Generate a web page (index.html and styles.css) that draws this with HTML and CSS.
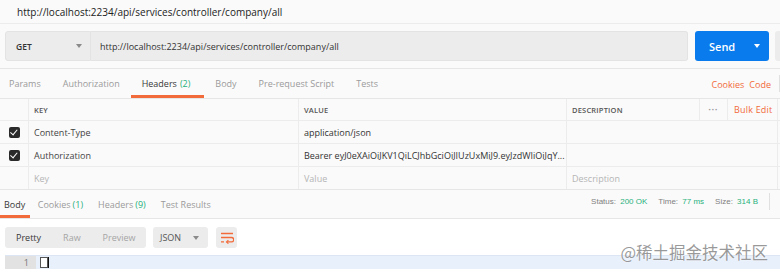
FILE: index.html
```html
<!DOCTYPE html>
<html>
<head>
  <meta charset="UTF-8">
  <link rel="stylesheet" href="styles.css">
</head>
<body>
  <div class="title-bar">http://localhost:2234/api/services/controller/company/all</div>

  <div class="request-bar">
    <div class="method">GET <span class="caret"></span></div>
    <div class="url">http://localhost:2234/api/services/controller/company/all</div>
    <div class="send">Send <span class="caret white"></span></div>
    <div class="save"></div>
  </div>

  <div class="req-tabs">
    <a class="tab">Params</a>
    <a class="tab">Authorization</a>
    <a class="tab active">Headers <span class="count">(2)</span></a>
    <a class="tab">Body</a>
    <a class="tab">Pre-request Script</a>
    <a class="tab">Tests</a>
    <div class="tab-links">
      <a class="orange-link">Cookies</a>
      <a class="orange-link">Code</a>
    </div>
  </div>

  <div class="headers-table">
    <div class="row head">
      <div class="cell check"></div>
      <div class="cell key">KEY</div>
      <div class="cell value">VALUE</div>
      <div class="cell desc">DESCRIPTION</div>
      <div class="cell dots">•••</div>
      <div class="cell bulk"><a class="orange-link">Bulk Edit</a></div>
    </div>
    <div class="row">
      <div class="cell check"><span class="checkbox"></span></div>
      <div class="cell key">Content-Type</div>
      <div class="cell value">application/json</div>
      <div class="cell desc wide"></div>
    </div>
    <div class="row">
      <div class="cell check"><span class="checkbox"></span></div>
      <div class="cell key">Authorization</div>
      <div class="cell value">Bearer eyJ0eXAiOiJKV1QiLCJhbGciOiJIUzUxMiJ9.eyJzdWIiOiJqY...</div>
      <div class="cell desc wide"></div>
    </div>
    <div class="row last">
      <div class="cell check"></div>
      <div class="cell key placeholder">Key</div>
      <div class="cell value placeholder">Value</div>
      <div class="cell desc wide placeholder">Description</div>
    </div>
  </div>

  <div class="res-tabs">
    <a class="tab active">Body</a>
    <a class="tab">Cookies <span class="count">(1)</span></a>
    <a class="tab">Headers <span class="count">(9)</span></a>
    <a class="tab">Test Results</a>
    <div class="meta">
      <span>Status: <b>200 OK</b></span>
      <span>Time: <b>77 ms</b></span>
      <span>Size: <b>314 B</b></span>
      <span class="meta-sep"></span>
    </div>
  </div>

  <div class="res-body">
    <div class="toolbar">
      <div class="mode-group">
        <span class="mode active">Pretty</span>
        <span class="mode">Raw</span>
        <span class="mode">Preview</span>
      </div>
      <div class="format">JSON <span class="caret"></span></div>
      <div class="wrap-btn">
        <svg width="14" height="12" viewBox="0 0 14 12">
          <path d="M1 1.5h12M1 5.5h10.5a2.2 2.2 0 0 1 0 4.4H7M1 9.9h3" fill="none" stroke="#f26b3a" stroke-width="1.3"/>
          <path d="M8.4 8.2 6.5 9.9l1.9 1.7" fill="none" stroke="#f26b3a" stroke-width="1.2"/>
        </svg>
      </div>
    </div>
    <div class="editor">
      <div class="gutter">1</div>
      <div class="line"><span class="bracket"></span><span class="cursor"></span></div>
    </div>
    <div class="watermark">@稀土掘金技术社区</div>
  </div>
</body>
</html>
```

FILE: styles.css
```css
body {
  margin: 0;
  background: #fafafa;
  font-family: "Open Sans", "Noto Sans", sans-serif;
  font-size: 9px;
  color: #505050;
  overflow: hidden;
}

a {
  text-decoration: none;
}

.title-bar {
  height: 23px;
  line-height: 25px;
  padding-left: 17px;
  font-size: 10px;
  color: #222;
  border-bottom: 1px solid #ececec;
}

/* request url bar */
.request-bar {
  display: flex;
  height: 30px;
  padding: 7px 0 7px 5px;
  border-bottom: 1px solid #e6e6e6;
}

.method {
  width: 86px;
  display: flex;
  align-items: center;
  justify-content: space-between;
  padding: 0 8px 0 10px;
  box-sizing: border-box;
  background: #ececec;
  border: 1px solid #e3e3e3;
  border-radius: 3px 0 0 3px;
  font-size: 8.5px;
  font-weight: 600;
  color: #333;
}

.url {
  flex: 1;
  display: flex;
  align-items: center;
  padding-left: 9px;
  background: #ececec;
  border: 1px solid #e3e3e3;
  border-left: none;
  border-radius: 0 3px 3px 0;
  font-size: 9px;
  color: #333;
}

.send {
  width: 74px;
  margin-left: 7px;
  display: flex;
  align-items: center;
  justify-content: space-between;
  padding: 0 9px 0 14px;
  box-sizing: border-box;
  background: #097bed;
  border-radius: 3px;
  color: #fff;
  font-size: 11px;
  font-weight: 600;
}

.save {
  width: 5px;
  margin-left: 6px;
  background: #ececec;
  border-radius: 3px 0 0 3px;
}

.caret {
  width: 0;
  height: 0;
  border-left: 3px solid transparent;
  border-right: 3px solid transparent;
  border-top: 4px solid #8a8a8a;
}

.caret.white {
  border-top-color: #fff;
}

/* tabs */
.req-tabs,
.res-tabs {
  display: flex;
  align-items: stretch;
}

.req-tabs {
  height: 29px;
  padding-left: 9px;
  border-bottom: 1px solid #e6e6e6;
}

.tab {
  display: flex;
  align-items: center;
  padding: 2px 11px 0;
  color: #9a9a9a;
  border-bottom: 3px solid transparent;
}

.req-tabs .tab:first-child {
  padding-left: 0;
}

.req-tabs .tab.active {
  padding-right: 14px;
}

.tab.active {
  color: #383838;
  border-bottom-color: #f26b3a;
}

.count {
  color: #27b17c;
  margin-left: 3px;
}

.tab-links {
  margin: 6px 0 6px auto;
  display: flex;
  align-items: center;
  gap: 5px;
  padding: 2px 8px 0 0;
  border-right: 1px solid #e0e0e0;
}

.orange-link {
  color: #f26b3a;
}

/* headers table */
.headers-table {
  border-bottom: 1px solid #e6e6e6;
}

.row {
  display: flex;
  height: 22px;
  border-bottom: 1px solid #ececec;
}

.row.last {
  border-bottom: none;
}

.row.head {
  height: 21px;
  font-size: 7.5px;
  font-weight: 600;
  letter-spacing: 0.2px;
}

.cell {
  display: flex;
  align-items: center;
  border-right: 1px solid #ececec;
  padding-left: 5px;
  box-sizing: border-box;
  overflow: hidden;
  white-space: nowrap;
}

.cell.check {
  width: 29px;
  justify-content: center;
  padding-left: 0;
}

.cell.key {
  width: 270px;
  color: #444;
}

.cell.value {
  width: 268px;
  color: #333;
}

.row.head .cell.value,
.row.head .cell.key {
  color: #555;
}

.cell.desc {
  width: 133px;
  color: #555;
}

.cell.desc.wide {
  width: 211px;
}

.cell.dots {
  width: 28px;
  justify-content: center;
  padding-left: 0;
  color: #999;
  font-size: 6px;
  letter-spacing: 1px;
}

.cell.bulk {
  width: 50px;
  padding-left: 6px;
  font-size: 9px;
  font-weight: 400;
}

.cell.placeholder {
  color: #b5b5b5;
}

.checkbox {
  position: relative;
  width: 11px;
  height: 11px;
  background: #2a2a2a;
  border-radius: 2px;
}

.checkbox::after {
  content: "";
  position: absolute;
  left: 3.5px;
  top: 1.5px;
  width: 3px;
  height: 5.5px;
  border-right: 1.6px solid #fff;
  border-bottom: 1.6px solid #fff;
  transform: rotate(40deg);
}

/* response */
.res-tabs {
  height: 28px;
  border-bottom: 1px solid #e6e6e6;
}

.res-tabs .tab {
  padding: 4px 7.5px 0;
}

.res-tabs .tab:first-child {
  padding: 4px 5px 0 4px;
}

.res-tabs .count {
  margin-left: 2px;
}

.meta {
  margin-left: auto;
  display: flex;
  align-items: center;
  gap: 11px;
  padding-bottom: 6px;
  font-family: "Liberation Sans", Arial, sans-serif;
  font-size: 8px;
  color: #808080;
}

.meta b {
  font-weight: 400;
  color: #27b17c;
  margin-left: 2px;
}

.meta-sep {
  width: 10px;
  height: 17px;
  border-left: 1px solid #e0e0e0;
}

.res-body {
  position: relative;
  background: #fff;
  height: 46px;
  padding: 8px 0 0 5px;
  overflow: hidden;
}

.toolbar {
  display: flex;
  gap: 7px;
  height: 21px;
}

.mode-group {
  display: flex;
  align-items: center;
  width: 141px;
  background: #ececec;
  border-radius: 3px;
}

.mode {
  padding: 0 11px;
  color: #a5a5a5;
}

.mode.active {
  color: #383838;
}

.format {
  display: flex;
  align-items: center;
  justify-content: space-between;
  width: 55px;
  padding: 0 9px 0 7px;
  box-sizing: border-box;
  background: #ececec;
  border-radius: 3px;
  color: #555;
}

.wrap-btn {
  display: flex;
  align-items: center;
  justify-content: center;
  width: 21px;
  margin-left: 1px;
  background: #ececec;
  border-radius: 3px;
}

.editor {
  display: flex;
  height: 13px;
  margin-top: 7px;
  border-top: 1px solid #dbe5f3;
}

.gutter {
  width: 31px;
  padding-right: 7px;
  box-sizing: border-box;
  text-align: right;
  font-size: 9px;
  line-height: 13px;
  color: #777;
  background: #e2e2e2;
}

.line {
  flex: 1;
  display: flex;
  align-items: center;
  padding-left: 4px;
  background: #e8f0fb;
}

.bracket {
  width: 6px;
  height: 9px;
  border: 1px solid #555;
  background: #fff;
}

.cursor {
  width: 1px;
  height: 11px;
  background: #111;
}

.watermark {
  position: absolute;
  right: 12px;
  top: 23px;
  font-family: "Noto Sans CJK SC", sans-serif;
  font-size: 16.5px;
  line-height: 20px;
  color: rgba(120, 120, 120, 0.75);
  text-shadow: 0 0 2px #fff;
}
```
